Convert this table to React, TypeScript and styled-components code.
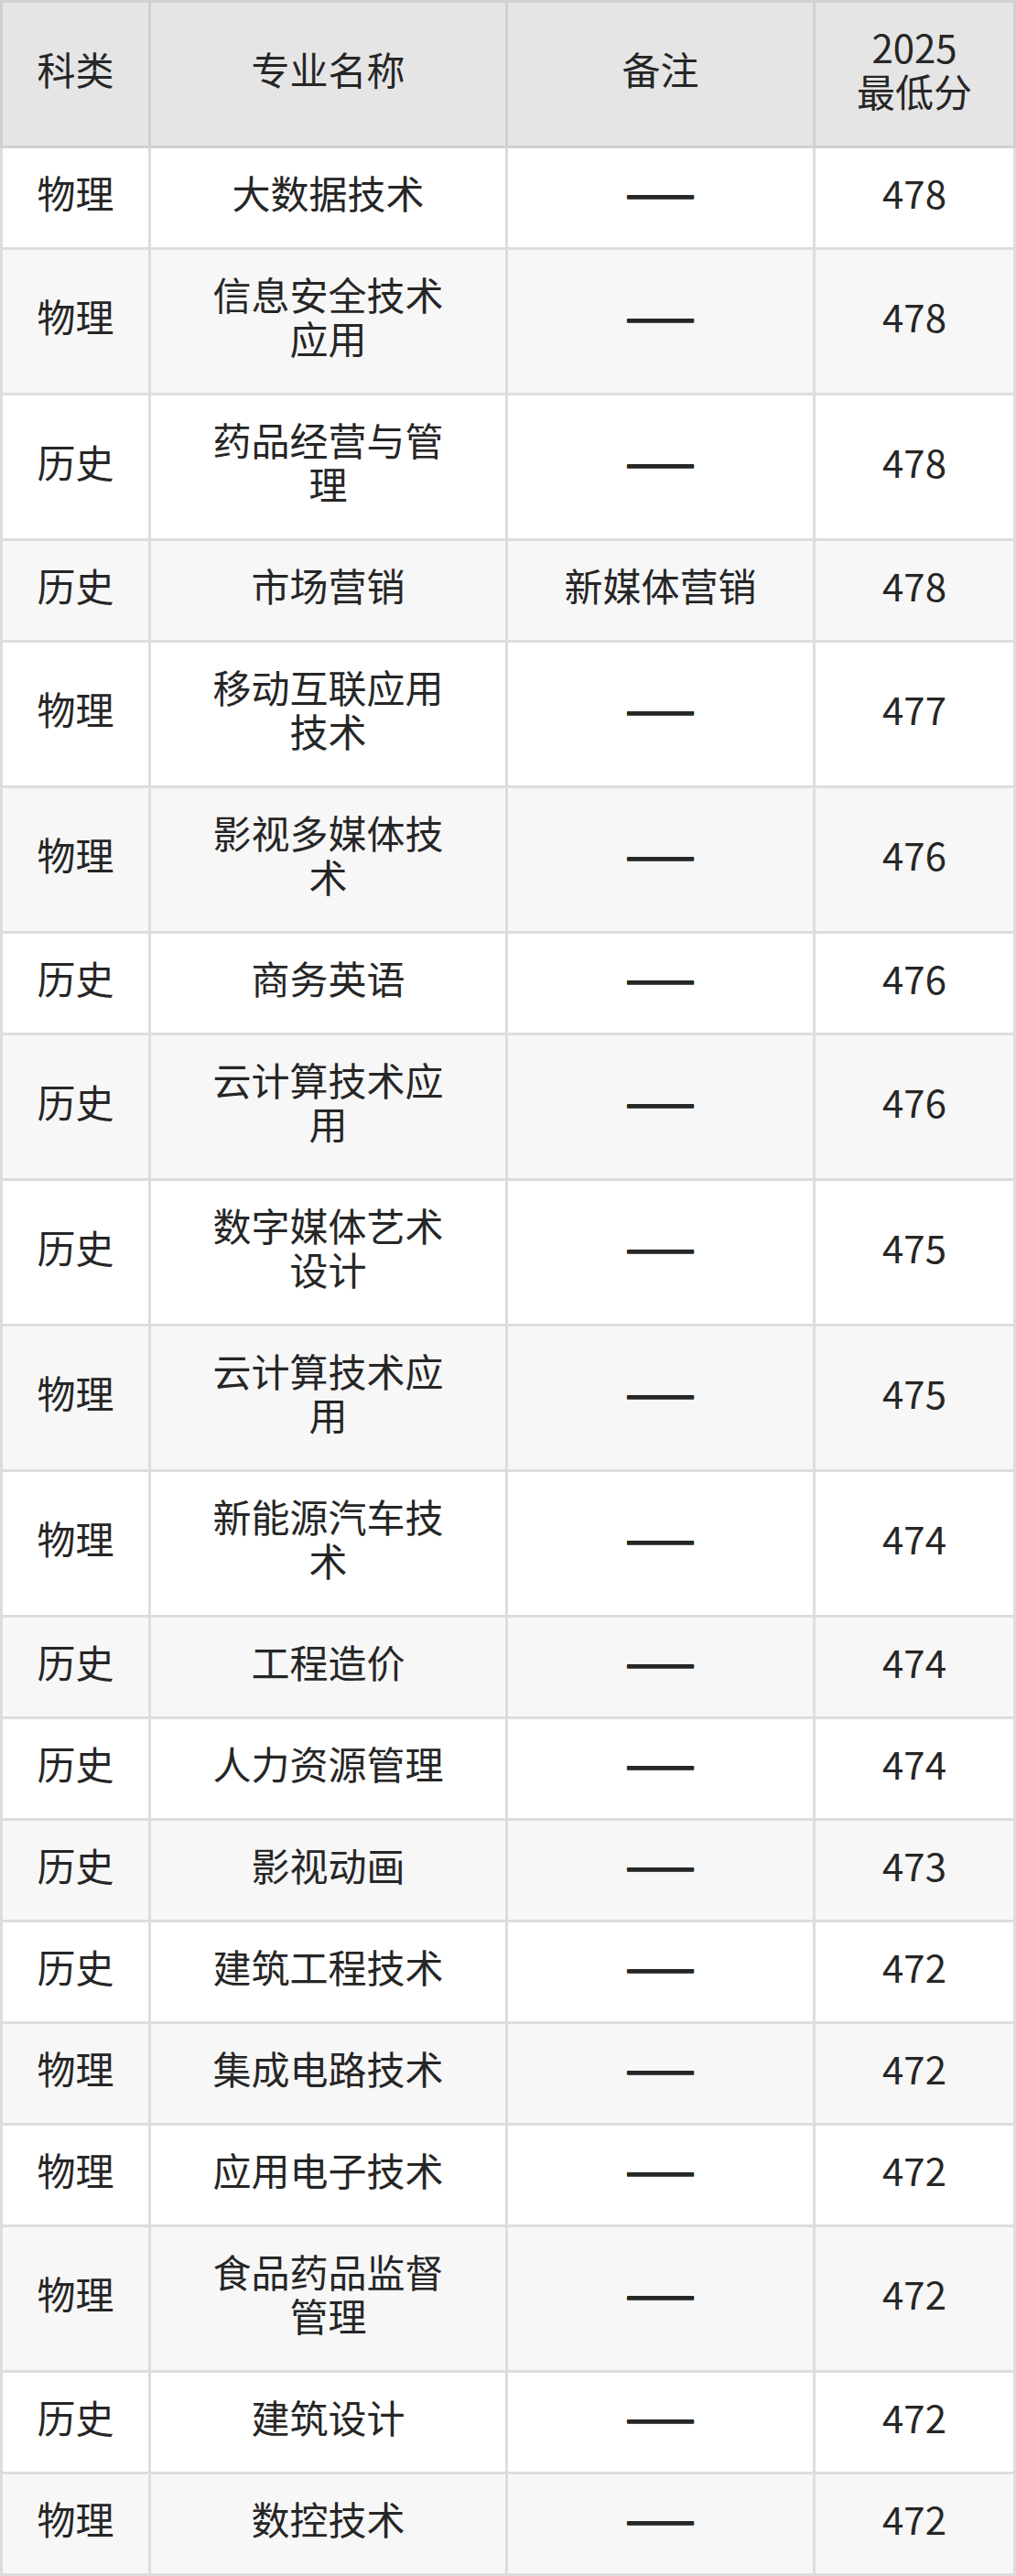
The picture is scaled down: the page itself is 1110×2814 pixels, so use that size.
import React from "react";
import styled, { createGlobalStyle } from "styled-components";

const GlobalStyle = createGlobalStyle`
  html, body {
    margin: 0;
    padding: 0;
    background: #ffffff;
  }
  body {
    font-family: "Noto Sans CJK SC", "Noto Sans", sans-serif;
  }
`;

const Table = styled.table`
  width: 1110px;
  table-layout: fixed;
  border-collapse: separate;
  border-spacing: 0;
  font-family: "Noto Sans CJK SC", "Noto Sans", sans-serif;
  font-size: 42px;
  line-height: 48px;
  color: #262626;
`;

const Col = styled.col<{ $w: number }>`
  width: ${(p) => p.$w}px;
`;

const HeadCell = styled.th`
  background: #e5e5e5;
  font-weight: 400;
  text-align: center;
  vertical-align: middle;
  padding: 24px 12px 36px;
  border-top: 3px solid #d0d0d0;
  border-right: 3px solid #d0d0d0;
  border-bottom: 3px solid #d0d0d0;
  &:first-child {
    border-left: 3px solid #d0d0d0;
  }
`;

const BodyRow = styled.tr<{ $alt: boolean }>`
  background: ${(p) => (p.$alt ? "#f7f7f7" : "#ffffff")};
`;

const Cell = styled.td<{ $wide?: boolean }>`
  text-align: center;
  vertical-align: middle;
  padding: 24px ${(p) => (p.$wide ? "56px" : "12px")} 36px;
  border-right: 3px solid #dddddd;
  border-bottom: 3px solid #dddddd;
  &:first-child {
    border-left: 3px solid #dddddd;
  }
`;

const Dash = styled.span`
  font-size: 46px;
  line-height: 0;
  letter-spacing: 5px;
  margin-right: -5px;
  text-shadow: 0 0.6px 0 currentColor, 0 -0.6px 0 currentColor;
`;

type Row = [string, string, string, string];

const rows: Row[] = [
  ["物理", "大数据技术", "——", "478"],
  ["物理", "信息安全技术应用", "——", "478"],
  ["历史", "药品经营与管理", "——", "478"],
  ["历史", "市场营销", "新媒体营销", "478"],
  ["物理", "移动互联应用技术", "——", "477"],
  ["物理", "影视多媒体技术", "——", "476"],
  ["历史", "商务英语", "——", "476"],
  ["历史", "云计算技术应用", "——", "476"],
  ["历史", "数字媒体艺术设计", "——", "475"],
  ["物理", "云计算技术应用", "——", "475"],
  ["物理", "新能源汽车技术", "——", "474"],
  ["历史", "工程造价", "——", "474"],
  ["历史", "人力资源管理", "——", "474"],
  ["历史", "影视动画", "——", "473"],
  ["历史", "建筑工程技术", "——", "472"],
  ["物理", "集成电路技术", "——", "472"],
  ["物理", "应用电子技术", "——", "472"],
  ["物理", "食品药品监督管理", "——", "472"],
  ["历史", "建筑设计", "——", "472"],
  ["物理", "数控技术", "——", "472"],
];

export default function App() {
  return (
    <>
      <GlobalStyle />
      <Table>
        <colgroup>
          <Col $w={165} />
          <Col $w={390} />
          <Col $w={336} />
          <Col $w={219} />
        </colgroup>
        <thead>
          <tr>
            <HeadCell>科类</HeadCell>
            <HeadCell>专业名称</HeadCell>
            <HeadCell>备注</HeadCell>
            <HeadCell>
              2025
              <br />
              最低分
            </HeadCell>
          </tr>
        </thead>
        <tbody>
          {rows.map((r, i) => (
            <BodyRow key={i} $alt={i % 2 === 1}>
              <Cell>{r[0]}</Cell>
              <Cell $wide>{r[1]}</Cell>
              <Cell>{r[2] === "——" ? <Dash>——</Dash> : r[2]}</Cell>
              <Cell>{r[3]}</Cell>
            </BodyRow>
          ))}
        </tbody>
      </Table>
    </>
  );
}
